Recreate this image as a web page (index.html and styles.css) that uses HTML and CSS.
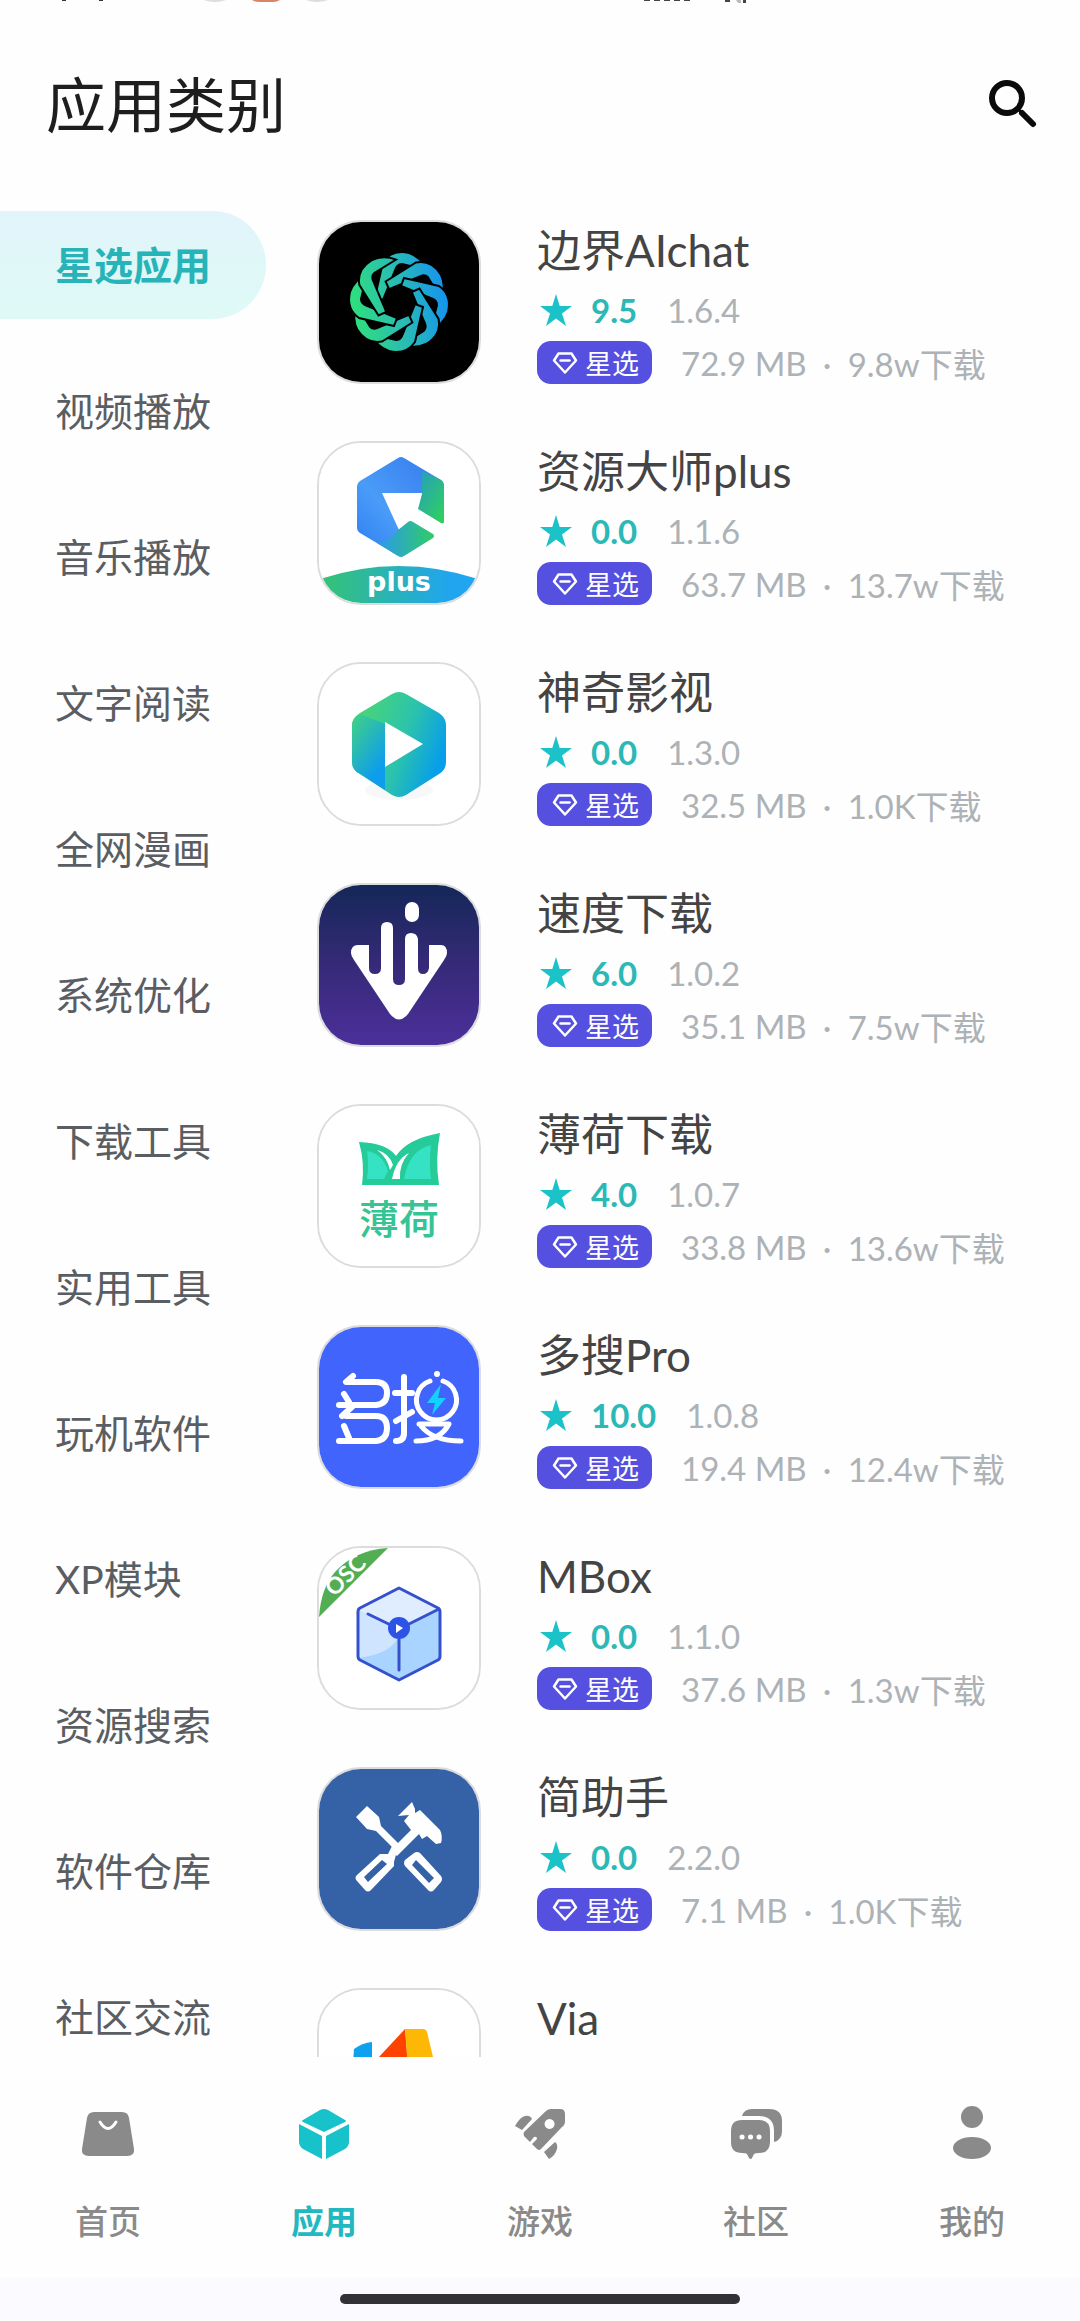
FILE: index.html
```html
<!DOCTYPE html>
<html lang="zh-CN">

<head>
    <meta charset="UTF-8">
    <meta name="viewport" content="width=device-width, initial-scale=1.0">
    <title>应用类别</title>
    <link rel="stylesheet" href="styles.css">
</head>

<body>
    <!--公用图标-->
    <svg class="sprite" aria-hidden="true">
        <symbol id="star" viewBox="0 0 32 32">
            <path d="M16 0l3.700 12H32l-10 7.500L26 32l-10-7.600L6 32l4-12.500L0 12h12.300z" fill="#1bc2c7" />
        </symbol>
        <symbol id="gem" viewBox="0 0 26 24">
            <path d="M6.500 2.500h13l4.500 7-11 12L2 9.500z" fill="none" stroke="#fff" stroke-width="2.500" stroke-linejoin="round" />
            <path d="M8.500 9.500h9" stroke="#fff" stroke-width="2.500" stroke-linecap="round" />
        </symbol>
    </svg>

    <div class="page">
        <svg class="status" viewBox="0 0 1080 4" aria-hidden="true">
            <path d="M62 0h4v1h-4zM99 0h4v1h-4z" fill="#333" />
            <path d="M204 0h22q-5 2-11 2t-11-2zM306 0h22q-5 2-11 2t-11-2z" fill="#ddd" />
            <path d="M252 0h28q-3 2-7 2h-14q-4 0-7-2z" fill="#d9846a" />
            <path d="M644 0h6v1h-6zM654 0h6v1h-6zM664 0h6v1h-6zM674 0h6v1h-6zM684 0h6v1h-6zM725 0h5v2h-5zM743 0h3v3h-3z" fill="#444" />
            <path d="M736 0h5v3h-3z" fill="#bbb" />
        </svg>
        <header class="header">
            <h1>应用类别</h1>
            <button class="search" aria-label="搜索">
                <svg viewBox="0 0 50 50">
                    <circle cx="19" cy="18" r="15" fill="none" stroke="#0b0b0b" stroke-width="6" />
                    <path d="M30 29l4 4" stroke="#0b0b0b" stroke-width="3" />
                    <path d="M34 33l11 11" stroke="#0b0b0b" stroke-width="6" stroke-linecap="round" />
                </svg>
            </button>
        </header>

        <main class="main">
            <nav class="category">
                <a class="active" href="#">星选应用</a>
                <a href="#">视频播放</a>
                <a href="#">音乐播放</a>
                <a href="#">文字阅读</a>
                <a href="#">全网漫画</a>
                <a href="#">系统优化</a>
                <a href="#">下载工具</a>
                <a href="#">实用工具</a>
                <a href="#">玩机软件</a>
                <a href="#">XP模块</a>
                <a href="#">资源搜索</a>
                <a href="#">软件仓库</a>
                <a href="#">社区交流</a>
            </nav>

            <ul class="app-list">
                <li class="app">
                    <svg class="app-icon" viewBox="2 2 160 160">
                        <defs>
                            <linearGradient id="g1" gradientUnits="userSpaceOnUse" x1="35" y1="92" x2="130" y2="76">
                                <stop offset="0" stop-color="#2fe07c" />
                                <stop offset=".5" stop-color="#29bcb4" />
                                <stop offset="1" stop-color="#1593ef" />
                            </linearGradient>
                            <path id="blade" d="M58 77L66 42Q75 29 92 33Q104 37 110 50L85 44Q81 44 79 48L66 80Z" />
                            <mask id="m1" maskUnits="userSpaceOnUse" x="0" y="0" width="164" height="164">
                                <g fill="#fff" stroke="#000" stroke-width="2">
                                    <use href="#blade" />
                                    <use href="#blade" transform="rotate(45 82 82)" />
                                    <use href="#blade" transform="rotate(90 82 82)" />
                                    <use href="#blade" transform="rotate(135 82 82)" />
                                    <use href="#blade" transform="rotate(180 82 82)" />
                                    <use href="#blade" transform="rotate(225 82 82)" />
                                    <use href="#blade" transform="rotate(270 82 82)" />
                                    <use href="#blade" transform="rotate(315 82 82)" />
                                </g>
                            </mask>
                        </defs>
                        <rect width="164" height="164" fill="#000" />
                        <rect width="164" height="164" fill="url(#g1)" mask="url(#m1)" />
                    </svg>
                    <div class="info">
                        <h2>边界AIchat</h2>
                        <p class="rate"><svg><use href="#star" /></svg><b>9.5</b><span>1.6.4</span></p>
                        <p class="meta"><span class="tag"><svg><use href="#gem" /></svg>星选</span><span>72.9 MB</span><i>·</i><span>9.8w下载</span></p>
                    </div>
                </li>
                <li class="app">
                    <svg class="app-icon" viewBox="2 2 160 160">
                        <defs>
                            <linearGradient id="g2" x1="0" y1="1" x2="1" y2="0">
                                <stop offset="0" stop-color="#2e7df2" />
                                <stop offset=".4" stop-color="#4a9cf8" />
                                <stop offset="1" stop-color="#3478ee" />
                            </linearGradient>
                            <linearGradient id="g2b" x1="0" y1="0" x2=".8" y2="1">
                                <stop offset="0" stop-color="#279dc0" />
                                <stop offset="1" stop-color="#2fce62" />
                            </linearGradient>
                            <linearGradient id="g2c">
                                <stop offset="0" stop-color="#36c46f" />
                                <stop offset=".8" stop-color="#20a5ee" />
                            </linearGradient>
                            <linearGradient id="g2d">
                                <stop offset="0" stop-color="#2b98ee" />
                                <stop offset="1" stop-color="#30cc66" />
                            </linearGradient>
                        </defs>
                        <rect width="164" height="164" fill="#fff" />
                        <path d="M40 45q0-3 3-5l38-23q3-2 6 0l37 22q3 2 3 5v10l-23-2H65l17 37-2 25q0 0-37-22-3-2-3-5z" fill="url(#g2)" />
                        <path d="M105 30l19 9q3 2 3 5v37q0 2-3 1L101 68l4-15z" fill="url(#g2b)" />
                        <path d="M81 89l10-8q2-2 5 0l20 12q2 2 0 4L87 115q-3 2-6 0L60 102q14-2 21-13z" fill="url(#g2d)" />
                        <path d="M0 139Q82 111 164 139v25H0z" fill="url(#g2c)" />
                        <text class="plus" x="82" y="150" text-anchor="middle">plus</text>
                    </svg>
                    <div class="info">
                        <h2>资源大师plus</h2>
                        <p class="rate"><svg><use href="#star" /></svg><b>0.0</b><span>1.1.6</span></p>
                        <p class="meta"><span class="tag"><svg><use href="#gem" /></svg>星选</span><span>63.7 MB</span><i>·</i><span>13.7w下载</span></p>
                    </div>
                </li>
                <li class="app">
                    <svg class="app-icon" viewBox="2 2 160 160">
                        <defs>
                            <linearGradient id="g3" x1="0" y1=".1" x2="1" y2=".5">
                                <stop offset="0" stop-color="#4fd96c" />
                                <stop offset=".6" stop-color="#2bc3ac" />
                                <stop offset="1" stop-color="#089eea" />
                            </linearGradient>
                            <linearGradient id="g3b" x1="0" y1="0" x2=".6" y2="1">
                                <stop offset="0" stop-color="#42d383" />
                                <stop offset=".9" stop-color="#0d9dec" />
                            </linearGradient>
                        </defs>
                        <rect width="164" height="164" fill="#fff" />
                        <ellipse cx="82" cy="128" rx="34" ry="10" fill="#f8f8f8" />
                        <path d="M75 32q7-4 14 0l33 19q7 5 7 12v37q0 8-7 12l-33 21q-7 4-14 0l-32-21q-8-4-8-12V63q0-7 8-12z" fill="url(#g3)" />
                        <path d="M35 64q0-7 8-12l25 10v66l-25-16q-8-4-8-12z" fill="url(#g3b)" />
                        <path d="M68 60l38 22-38 23z" fill="#fff" />
                    </svg>
                    <div class="info">
                        <h2>神奇影视</h2>
                        <p class="rate"><svg><use href="#star" /></svg><b>0.0</b><span>1.3.0</span></p>
                        <p class="meta"><span class="tag"><svg><use href="#gem" /></svg>星选</span><span>32.5 MB</span><i>·</i><span>1.0K下载</span></p>
                    </div>
                </li>
                <li class="app">
                    <svg class="app-icon" viewBox="2 2 160 160">
                        <defs>
                            <linearGradient id="g4" x1="0" y1="0" x2="0" y2="1">
                                <stop offset="0" stop-color="#142757" />
                                <stop offset=".5" stop-color="#362a78" />
                                <stop offset="1" stop-color="#4c2f9b" />
                            </linearGradient>
                        </defs>
                        <rect width="164" height="164" fill="url(#g4)" />
                        <rect x="88" y="19" width="14" height="20" rx="7" fill="#fff" />
                        <path d="M52 62V85q0 6 6 6t6-6V45q0-6 6-6t6 6V96q0 6 6 6t6-6V56q0-6 6-6t7 6V85q0 6 5 6t6-6V62h12q6 0 6 8 0 3-3 7L91 131q-9 11-18 0L37 77q-3-4-3-7 0-8 7-8z" fill="#fff" />
                    </svg>
                    <div class="info">
                        <h2>速度下载</h2>
                        <p class="rate"><svg><use href="#star" /></svg><b>6.0</b><span>1.0.2</span></p>
                        <p class="meta"><span class="tag"><svg><use href="#gem" /></svg>星选</span><span>35.1 MB</span><i>·</i><span>7.5w下载</span></p>
                    </div>
                </li>
                <li class="app">
                    <svg class="app-icon" viewBox="2 2 160 160">
                        <rect width="164" height="164" fill="#fff" />
                        <path d="M42 38q28 1 37 14 11-17 44-23-5 26-1 52H45q3-22-3-43z" fill="#25cb98" />
                        <path d="M50 47q15 2 21 20l-4 8H50q2-15 0-28zM87 75q5-29 27-34-2 19 0 34z" fill="#35e2c4" />
                        <path d="M60 46q12 3 16 15l-3 5q-3-13-13-20zM75 75q4-20 17-26-10 11-9 26z" fill="#fff" />
                        <text class="mint" x="82" y="130" text-anchor="middle">薄荷</text>
                    </svg>
                    <div class="info">
                        <h2>薄荷下载</h2>
                        <p class="rate"><svg><use href="#star" /></svg><b>4.0</b><span>1.0.7</span></p>
                        <p class="meta"><span class="tag"><svg><use href="#gem" /></svg>星选</span><span>33.8 MB</span><i>·</i><span>13.6w下载</span></p>
                    </div>
                </li>
                <li class="app">
                    <svg class="app-icon" viewBox="2 2 160 160">
                        <rect width="164" height="164" fill="#4064fc" />
                        <g fill="none" stroke="#fff" stroke-width="6" stroke-linecap="round" stroke-linejoin="round">
                            <path d="M36 51L29 57H59q11 0 11 11t-11 12H22M27 69l5 8M36 81L25 91M29 91H59q11 0 11 12t-11 13H22M27 101l5 12" />
                            <path d="M87 52V108q0 8-8 8M78 68h17M79 96l16-9" />
                            <path d="M113 56a20 20 0 1 0 13 0" stroke-width="5" />
                            <path d="M102 99h30q-9 17-33 17M104 101q12 15 40 15" stroke-width="5" />
                        </g>
                        <circle cx="120" cy="49" r="3" fill="#fff" />
                        <path d="M124 59l-14 19h8l-3 12 14-17h-8z" fill="#12d2fb" />
                    </svg>
                    <div class="info">
                        <h2>多搜Pro</h2>
                        <p class="rate"><svg><use href="#star" /></svg><b>10.0</b><span>1.0.8</span></p>
                        <p class="meta"><span class="tag"><svg><use href="#gem" /></svg>星选</span><span>19.4 MB</span><i>·</i><span>12.4w下载</span></p>
                    </div>
                </li>
                <li class="app">
                    <svg class="app-icon" viewBox="2 2 160 160">
                        <rect width="164" height="164" fill="#fff" />
                        <path d="M2 71Q4 42 18 26 38 4 71 2z" fill="#52ad53" />
                        <text class="osc" text-anchor="middle" transform="translate(34 35) rotate(-45)">OSC</text>
                        <path d="M82 42l41 22v49l-41 21-41-21V64z" fill="#a9d4ff" />
                        <path d="M41 64l41-22 41 22-41 20z" fill="#dfedff" />
                        <path d="M41 64l41 20v6q-8 18-41 22z" fill="#cfe5ff" />
                        <path d="M82 42l39 20q2 1 2 4v44q0 3-2 4l-39 20-39-20q-2-1-2-4V66q0-3 2-4zM51 68l31 15 40-20M82 83v41" fill="none" stroke="#3450cc" stroke-width="3" stroke-linejoin="round" stroke-linecap="round" />
                        <circle cx="82" cy="82" r="11" fill="#2c53e6" />
                        <path d="M79 78l7 4-7 5z" fill="#fff" />
                    </svg>
                    <div class="info">
                        <h2>MBox</h2>
                        <p class="rate"><svg><use href="#star" /></svg><b>0.0</b><span>1.1.0</span></p>
                        <p class="meta"><span class="tag"><svg><use href="#gem" /></svg>星选</span><span>37.6 MB</span><i>·</i><span>1.3w下载</span></p>
                    </div>
                </li>
                <li class="app">
                    <svg class="app-icon" viewBox="2 2 160 160">
                        <rect width="164" height="164" fill="#3562a6" />
                        <path d="M39 50l11-11 12 11 2 9 18 18-5 5-18-18-9-2z" fill="#fff" />
                        <path d="M81 49l14-14 3 7v4l5-3 20 20q3 6 1 13l-5 1-9-8-5 3-3-5-22 22-6-6 20-20-7-9 5-6z" fill="#fff" />
                        <path d="M75 79l5 5-3 11v4l-23 24q-3 3-6 0l-8-9q-3-3 0-6l23-21h8zM97 86q3-2 6 0l21 23q2 3 0 6l-7 8q-3 3-6 0L88 99q-2-3 0-6z" fill="#fff" />
                        <path d="M65 93l5 4-19 18-4-5zM99 93l18 18-5 5-17-18z" fill="#3562a6" />
                    </svg>
                    <div class="info">
                        <h2>简助手</h2>
                        <p class="rate"><svg><use href="#star" /></svg><b>0.0</b><span>2.2.0</span></p>
                        <p class="meta"><span class="tag"><svg><use href="#gem" /></svg>星选</span><span>7.1 MB</span><i>·</i><span>1.0K下载</span></p>
                    </div>
                </li>
                <li class="app">
                    <svg class="app-icon" viewBox="2 2 160 160">
                        <rect width="164" height="164" fill="#fff" />
                        <path d="M37 61q8-6 18-7v50H34z" fill="#0ea2ee" />
                        <path d="M88 41L61 70v20h31z" fill="#ff4200" />
                        <path d="M88 41h18q3 0 4 3l12 50H92z" fill="#fdb805" />
                    </svg>
                    <div class="info">
                        <h2>Via</h2>
                    </div>
                </li>
            </ul>
        </main>

        <!--底部导航-->
        <nav class="tabbar">
            <a href="#">
                <svg viewBox="0 0 56 56">
                    <path d="M14 7h28q6 0 7 6l5 31q1 7-7 7H9q-8 0-7-7l5-31q1-6 7-6z" fill="#8a8a8a" />
                    <path d="M20 17q8 13 16 0" fill="none" stroke="#fff" stroke-width="3" stroke-linecap="round" />
                </svg>
                <span>首页</span>
            </a>
            <a class="active" href="#">
                <svg viewBox="0 0 56 56">
                    <path d="M24 5q4-2 8 0l17 10q2 1 0 2L28 27 7 17q-2-1 0-2zM3 19l23 12v23L7 44q-4-3-4-7zM53 19v18q0 4-4 7L30 54V31z" fill="#18c2ca" />
                </svg>
                <span>应用</span>
            </a>
            <a href="#">
                <svg viewBox="0 0 56 56">
                    <path fill-rule="evenodd" d="M34 6q2-2 5-2h9q5 0 5 5v7q0 4-3 6L29 44q-2 2-4 0l-5-5 5-5q0-3-3-2l-4 5-6-6q-1-2 0-4zM37.500 14a5 5 0 1 0 .1 0z" fill="#8a8a8a" />
                    <path d="M3 21q5-9 10-10 5-1 7 3L10 25zM43 37q3 2 2 7-2 7-8 10l-5-7z" fill="#8a8a8a" />
                </svg>
                <span>游戏</span>
            </a>
            <a href="#">
                <svg viewBox="0 0 56 56">
                    <path d="M14 11q2-7 10-7h17q13 0 13 12v10q0 9-8 11V26q0-15-15-15z" fill="#8a8a8a" />
                    <path d="M14 15h17q11 0 11 11v11q0 11-11 11-4 0-5 1l-2 4q-1 2-3 0l-2-4q-1-1-5-1Q3 48 3 37V26q0-11 11-11z" fill="#8a8a8a" />
                    <path d="M14 32h.1M22.500 32h.1M31 32h.1" stroke="#fff" stroke-width="5" stroke-linecap="round" />
                </svg>
                <span>社区</span>
            </a>
            <a href="#">
                <svg viewBox="0 0 56 56">
                    <circle cx="28" cy="12" r="11" fill="#8a8a8a" />
                    <ellipse cx="28" cy="43" rx="19" ry="11" fill="#8a8a8a" />
                </svg>
                <span>我的</span>
            </a>
        </nav>
        <div class="home-bar"><span></span></div>
    </div>
</body>

</html>
```
FILE: styles.css
```css
* {
    padding: 0;
    margin: 0;
    box-sizing: border-box;
    list-style: none;
    text-decoration: none;
}

body {
    background: #fefefe;
    font-family: Lato, "Noto Sans CJK SC", sans-serif;
    color: #444;
}

.sprite {
    display: none;
}

.page {
    display: flex;
    flex-direction: column;
    height: 100vh;
}

.status {
    display: block;
    width: 100%;
    flex: none;
}

/*顶部标题*/
.header {
    display: flex;
    align-items: center;
    justify-content: space-between;
    flex: none;
    height: 207px;
    padding: 0 42px 6px 46px;
}

.header h1 {
    font-size: 60px;
    font-weight: 400;
    line-height: 90px;
    color: #1e1e1e;
}

.search {
    width: 50px;
    height: 50px;
    border: none;
    background: none;
    cursor: pointer;
}

.search svg {
    display: block;
}

.main {
    display: flex;
    flex: 1;
    min-height: 0;
    overflow: hidden;
}

/*左侧分类*/
.category {
    display: flex;
    flex-direction: column;
    flex: none;
    gap: 38px;
    width: 266px;
}

.category a {
    flex: none;
    padding-left: 55px;
    font-size: 39px;
    line-height: 108px;
    color: #5a5d62;
}

.category .active {
    border-radius: 0 54px 54px 0;
    background: linear-gradient(#e1f4fa, #defaf6);
    font-weight: 700;
    color: #27b4b9;
}

/*右侧应用列表*/
.app-list {
    flex: 1;
    padding: 9px 0 0 51px;
}

.app {
    display: flex;
    gap: 56px;
    margin-bottom: 56px;
}

.app-icon {
    flex: none;
    width: 164px;
    height: 164px;
    border: 2px solid #dcdcdc;
    border-radius: 44px;
}

.plus {
    font: bold 27px "DejaVu Sans", sans-serif;
    fill: #fff;
}

.mint {
    font-size: 40px;
    font-weight: 500;
    fill: #35c494;
}

.osc {
    font-size: 23px;
    font-weight: bold;
    fill: #fff;
}

.info h2 {
    font-size: 44px;
    font-weight: 400;
    line-height: 60px;
}

.rate,
.meta {
    display: flex;
    align-items: center;
    font-size: 33px;
    white-space: nowrap;
    color: #adb2b6;
}

.rate {
    height: 60px;
    padding-left: 3px;
}

.rate svg {
    width: 32px;
    height: 32px;
}

.rate b {
    margin: 0 30px 0 19px;
    color: #2bb8b6;
}

.meta {
    height: 45px;
}

.meta i {
    width: 41px;
    font-style: normal;
    text-align: center;
}

/*星选标签*/
.tag {
    display: flex;
    align-items: center;
    gap: 7px;
    height: 43px;
    margin-right: 29px;
    padding: 0 13px 0 15px;
    border-radius: 14px;
    background: #5550e0;
    font-size: 27px;
    color: #fff;
}

.tag svg {
    width: 26px;
    height: 24px;
}

/*底部导航*/
.tabbar {
    display: flex;
    flex: none;
    height: 220px;
    padding-top: 48px;
}

.tabbar a {
    display: flex;
    flex: 1;
    flex-direction: column;
    align-items: center;
    gap: 36px;
    font-size: 33px;
    font-weight: 500;
    line-height: 48px;
    color: #8a8a8a;
}

.tabbar svg {
    width: 56px;
    height: 56px;
}

.tabbar .active {
    font-weight: 700;
    color: #22b8c0;
}

.home-bar {
    flex: none;
    height: 44px;
    padding-top: 17px;
    background: #fbfaff;
}

.home-bar span {
    display: block;
    width: 37%;
    height: 10px;
    margin: 0 auto;
    border-radius: 5px;
    background: #323136;
}
```
